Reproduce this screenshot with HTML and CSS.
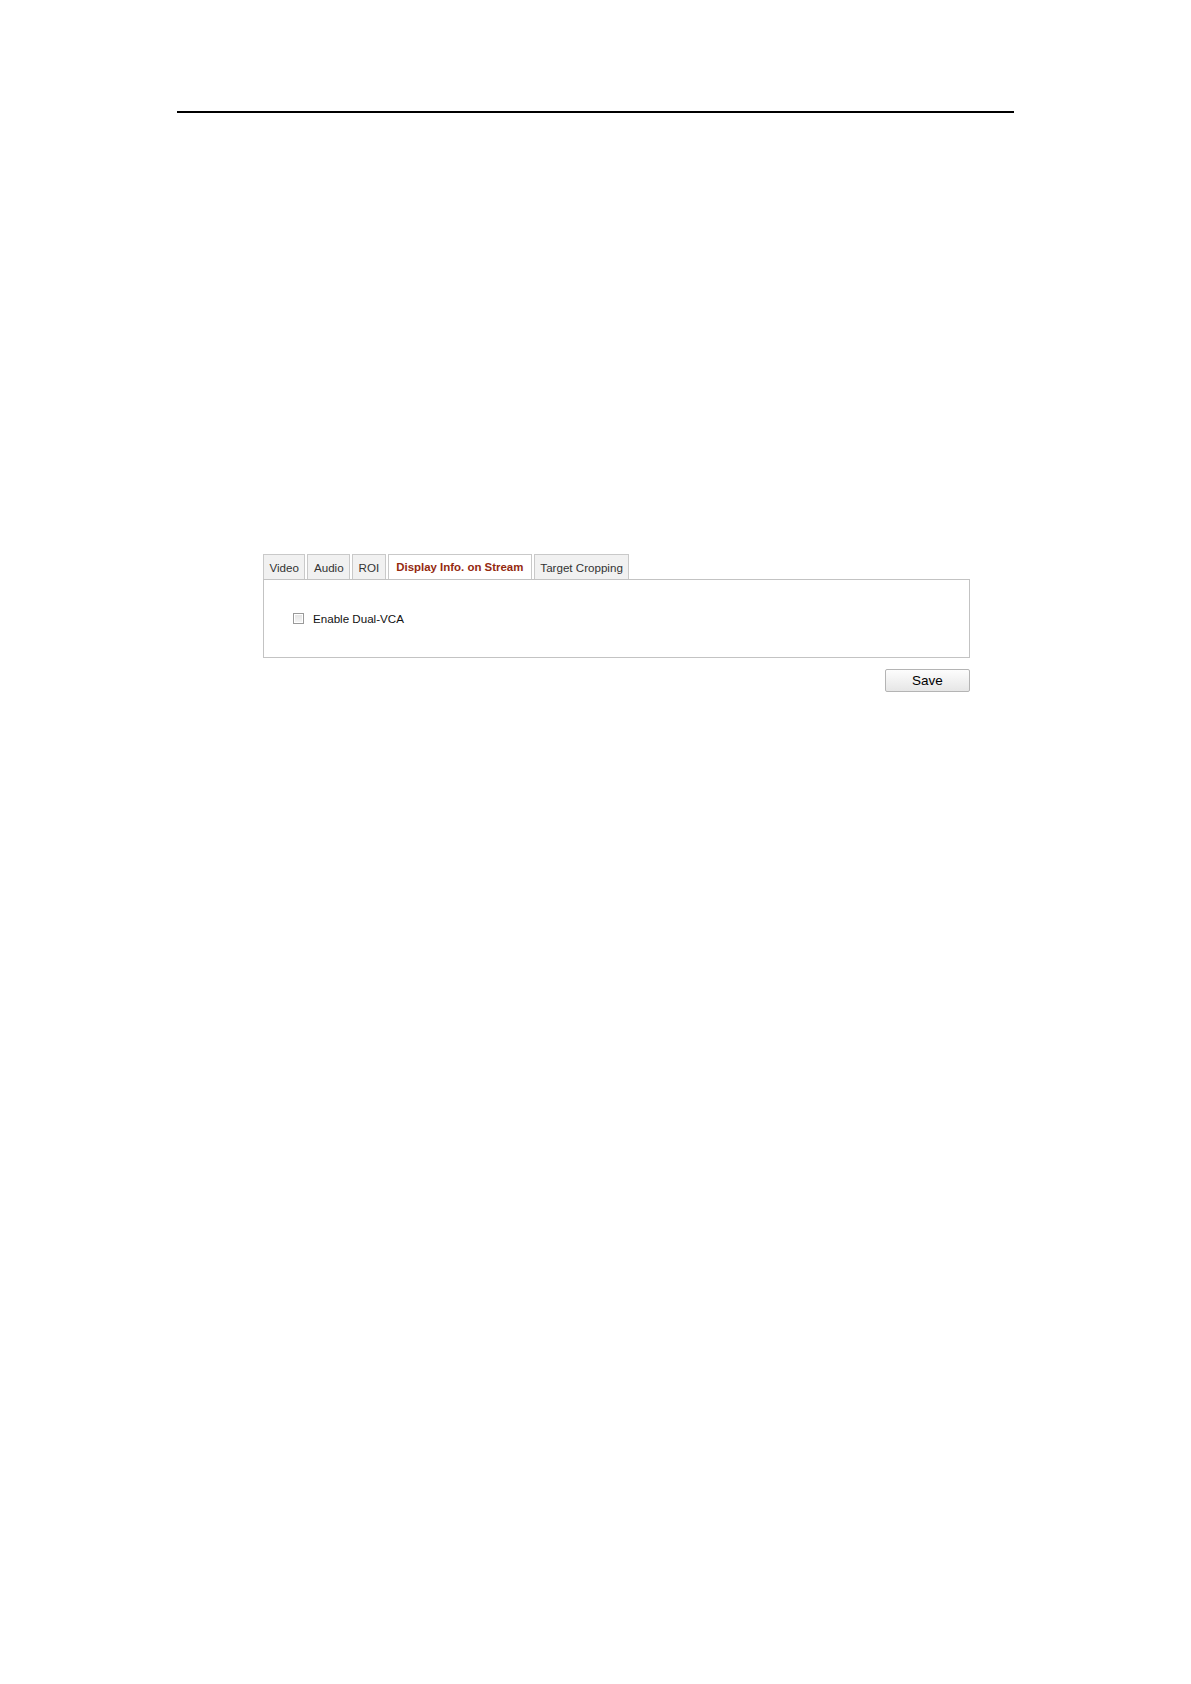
FILE: index.html
```html
<!DOCTYPE html>
<html>
<head>
<meta charset="utf-8">
<link rel="stylesheet" href="styles.css">
</head>
<body>
<div class="page">
  <div class="rule"></div>
  <div class="settings">
    <div class="tabs">
      <div class="tab">Video</div>
      <div class="tab">Audio</div>
      <div class="tab">ROI</div>
      <div class="tab active">Display Info. on Stream</div>
      <div class="tab">Target Cropping</div>
    </div>
    <div class="panel">
      <label class="option"><span class="checkbox"></span><span class="label-text">Enable Dual-VCA</span></label>
    </div>
    <div class="actions">
      <button class="save">Save</button>
    </div>
  </div>
</div>
</body>
</html>
```
FILE: styles.css
```css
html, body {
  margin: 0;
  padding: 0;
  background: #ffffff;
}
.page {
  padding-top: 111px;
  font-family: "Liberation Sans", Arial, sans-serif;
}
.rule {
  margin-left: 177px;
  width: 837px;
  height: 2px;
  background: #000000;
}
.settings {
  margin: 441px 0 0 263px;
  width: 707px;
}
.tabs {
  display: flex;
  gap: 2px;
  height: 25px;
  align-items: flex-start;
}
.tab {
  box-sizing: border-box;
  height: 25px;
  padding: 0 5.5px;
  border: 1px solid #c9c9c9;
  border-bottom: none;
  background: #f1f1f1;
  color: #333333;
  font-size: 11.6px;
  line-height: 25px;
  white-space: nowrap;
}
.tab.active {
  background: #ffffff;
  color: #94290f;
  font-weight: bold;
  font-size: 11.45px;
  padding: 0 7.5px;
}
.panel {
  box-sizing: border-box;
  height: 79px;
  border: 1px solid #c3c3c3;
  padding: 33px 0 0 29px;
}
.option {
  display: flex;
  align-items: center;
  gap: 9px;
  height: 11px;
}
.checkbox {
  box-sizing: border-box;
  width: 11px;
  height: 11px;
  border: 1px solid #9a9a9a;
  background: linear-gradient(#e2e2e2, #f6f6f6);
  box-shadow: inset 0 0 0 1px #ffffff;
}
.label-text {
  font-size: 11.6px;
  color: #111111;
}
.actions {
  display: flex;
  justify-content: flex-end;
  margin-top: 11px;
}
.save {
  box-sizing: border-box;
  width: 85px;
  height: 23px;
  border: 1px solid #b4b4b4;
  border-radius: 2px;
  background: linear-gradient(#fdfdfd, #e6e6e6);
  font-family: "Liberation Sans", Arial, sans-serif;
  font-size: 13.5px;
  color: #000000;
  padding: 0;
}
```
